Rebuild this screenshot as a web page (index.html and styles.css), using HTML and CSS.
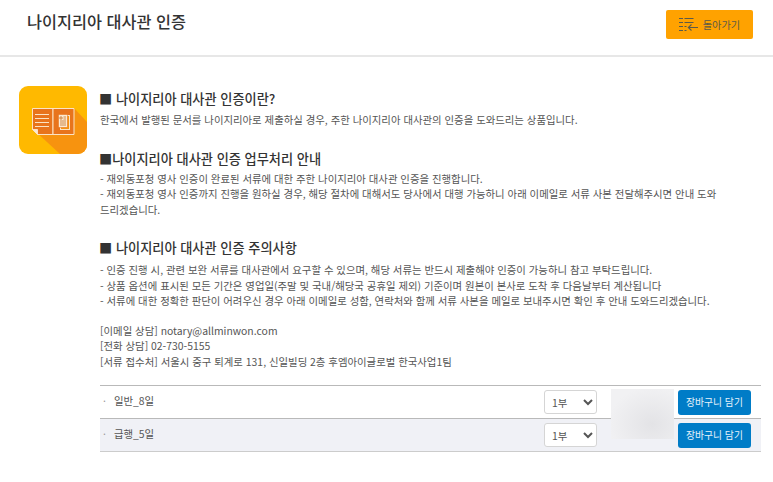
FILE: index.html
```html
<!DOCTYPE html>
<html lang="ko">
<head>
<meta charset="utf-8">
<title>나이지리아 대사관 인증</title>
<link rel="stylesheet" href="styles.css">
</head>
<body>
<header class="top">
  <h1 class="title">나이지리아 대사관 인증</h1>
  <a class="back" href="#">
    <svg class="back-icon" width="20" height="16" viewBox="0 0 20 16"><g fill="none" stroke="#5a5a4a" stroke-width="1.100"><path d="M0 1.500h4M5.500 1.500h9M0 5.500h4M5.500 5.500h9M0 9.500h4M5.500 9.500h2M0 13.500h4M5.500 13.500h2"/><path d="M19 10.500h-9.500M12.500 7.500l-3.200 3 3.200 3"/></g></svg>
    <span>돌아가기</span>
  </a>
</header>
<main class="content">
  <div class="intro">
    <svg class="logo" width="68" height="68" viewBox="0 0 68 68">
      <defs><clipPath id="c"><rect width="68" height="68" rx="9"/></clipPath></defs>
      <g clip-path="url(#c)">
        <rect width="68" height="68" fill="#ffb900"/>
        <path d="M55 22L68 36V68H41L16 45z" fill="#f7930f"/>
        <path d="M13.500 22.500H34V48.500H18.500L13.500 43.500z" fill="#e8741c" stroke="#fbe3c4"/>
        <path d="M34 22.500H55V48.500H34z" fill="#e8741c" stroke="#fbe3c4"/>
        <path d="M13.500 43.500h5v5z" fill="#fde9cf" stroke="#fbe3c4"/>
        <path d="M16 28.500h14M16 32.500h14M16 36.500h14M16 40.500h14" stroke="#fbe3c4" stroke-width="1.200"/>
        <rect x="41.500" y="29.500" width="9" height="14" fill="#f7930f" stroke="#fbe3c4"/>
        <rect x="39.500" y="28.500" width="9" height="13" rx="1" fill="#fde9cf" stroke="#e8741c" stroke-width=".6"/>
        <path d="M41 31h2v2h-2zM41 35h6M41 37h6M41 39h6M44.500 31h2.500M44.500 33h2.500" stroke="#c2722c" stroke-width=".8" fill="none"/>
      </g>
    </svg>
    <div class="copy">
      <section class="block first">
        <h2 class="heading">■ 나이지리아 대사관 인증이란?</h2>
        <p class="text">한국에서 발행된 문서를 나이지리아로 제출하실 경우, 주한 나이지리아 대사관의 인증을 도와드리는 상품입니다.</p>
      </section>
      <section class="block second">
        <h2 class="heading">■나이지리아 대사관 인증 업무처리 안내</h2>
        <p class="text">- 재외동포청 영사 인증이 완료된 서류에 대한 주한 나이지리아 대사관 인증을 진행합니다.<br>- 재외동포청 영사 인증까지 진행을 원하실 경우, 해당 절차에 대해서도 당사에서 대행 가능하니 아래 이메일로 서류 사본 전달해주시면 안내 도와드리겠습니다.</p>
      </section>
      <section class="block third">
        <h2 class="heading">■ 나이지리아 대사관 인증 주의사항</h2>
        <p class="text">- 인증 진행 시, 관련 보완 서류를 대사관에서 요구할 수 있으며, 해당 서류는 반드시 제출해야 인증이 가능하니 참고 부탁드립니다.<br>- 상품 옵션에 표시된 모든 기간은 영업일(주말 및 국내/해당국 공휴일 제외) 기준이며 원본이 본사로 도착 후 다음날부터 계산됩니다<br>- 서류에 대한 정확한 판단이 어려우신 경우 아래 이메일로 성함, 연락처와 함께 서류 사본을 메일로 보내주시면 확인 후 안내 도와드리겠습니다.</p>
        <p class="text contact">[이메일 상담] notary@allminwon.com<br>[전화 상담] 02-730-5155<br>[서류 접수처] 서울시 중구 퇴계로 131, 신일빌딩 2층 후엠아이글로벌 한국사업1팀</p>
      </section>
    </div>
  </div>
  <div class="options">
    <div class="row">
      <span class="name"><i class="dot">·</i>일반_8일</span>
      <select class="qty"><option>1부</option></select>
      <button class="cart" type="button">장바구니 담기</button>
    </div>
    <div class="row alt">
      <span class="name"><i class="dot">·</i>급행_5일</span>
      <select class="qty"><option>1부</option></select>
      <button class="cart" type="button">장바구니 담기</button>
    </div>
    <div class="blur"></div>
  </div>
</main>
</body>
</html>
```
FILE: styles.css
```css
* { box-sizing: border-box; }
html, body { margin: 0; padding: 0; }
body {
  width: 773px;
  height: 482px;
  overflow: hidden;
  background: #fff;
  color: #444;
  font-family: "Noto Sans CJK KR", "Noto Sans", sans-serif;
}
.top {
  height: 57px;
  border-bottom: 2px solid #e7e7e7;
  display: flex;
  justify-content: space-between;
  align-items: flex-start;
  padding: 10px 20px 0 27px;
}
.title {
  margin: 0;
  font-size: 16.300px;
  line-height: 23px;
  font-weight: 500;
  color: #333;
}
.back {
  width: 87px;
  height: 29px;
  display: flex;
  align-items: center;
  justify-content: center;
  gap: 4px;
  background: #ffa200;
  border-radius: 2px;
  color: #5c5a48;
  font-size: 10.200px;
  text-decoration: none;
}
.content { padding: 29px 12px 0 19px; }
.intro { display: flex; gap: 13px; }
.logo { flex: none; }
.copy { flex: 1; padding-right: 37px; }
.heading {
  margin: 0 0 0 -1px;
  font-size: 13.200px;
  line-height: 20px;
  font-weight: 500;
  color: #333;
}
.text {
  margin: 0;
  font-size: 10.400px;
  line-height: 15.500px;
  color: #555;
}
.block.first { padding-top: 3px; }
.block.first .text { margin-top: 3px; }
.block.second { margin-top: 21px; }
.block.second .text { margin-top: 2px; }
.block.third { margin-top: 21px; }
.block.third .text { margin-top: 4px; }
.block.third .contact { margin-top: 14px; }
.options {
  position: relative;
  margin: 16px 0 0 81px;
  border-bottom: 1px solid #ccc;
}
.row {
  height: 33px;
  border-top: 1px solid #b9b9b9;
  display: flex;
  align-items: center;
  padding-right: 10px;
  font-size: 10px;
  color: #555;
}
.row.alt { background: #f0f1f6; }
.name { flex: 1; padding: 0 0 3px 3px; font-size: 10.400px; }
.dot { font-style: normal; color: #999; margin-right: 8px; }
.qty {
  width: 53px;
  height: 24px;
  margin-right: 81px;
  border: 1px solid #d5d5d5;
  border-radius: 3px;
  background: #fff;
  color: #555;
  font: 10.400px "Noto Sans CJK KR", sans-serif;
  padding-left: 3px;
}
.cart {
  width: 73px;
  height: 25px;
  border: 0;
  border-radius: 3px;
  background: #007cc7;
  color: #e6f2fa;
  font: 9.800px "Noto Sans CJK KR", sans-serif;
  padding: 0;
}
.blur {
  position: absolute;
  top: 4px;
  right: 87px;
  width: 63px;
  height: 50px;
  background: radial-gradient(ellipse at 65% 70%, #e3e3e6, #f1f1f3 75%);
}
```
